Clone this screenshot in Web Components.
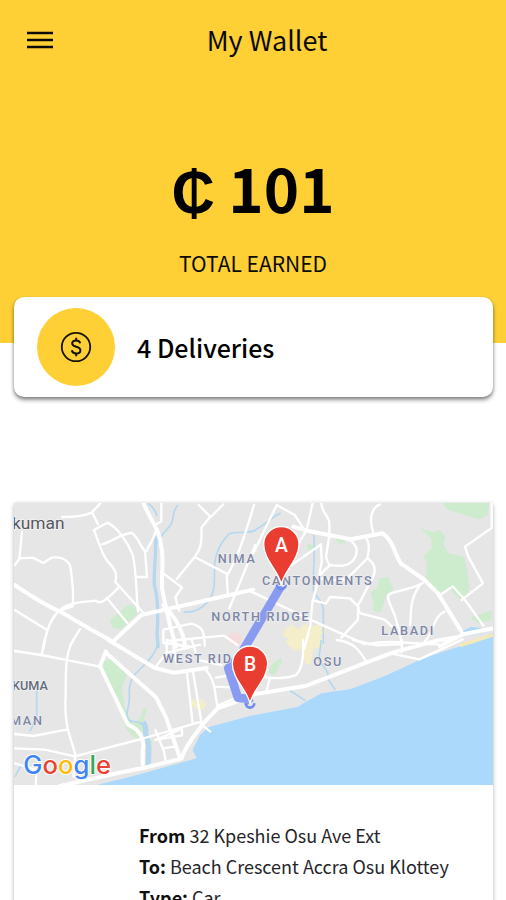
<!DOCTYPE html>
<html lang="en">
<head>
<meta charset="utf-8">
<meta name="viewport" content="width=device-width, initial-scale=1">
<title>My Wallet</title>
<style>
  html { scrollbar-width: none; }
  body {
    margin: 0;
    background: #fff;
    color: #0c0a05;
    font-family: "Noto Sans CJK SC", "Liberation Sans", sans-serif;
    --accent: #fed036;
  }
</style>
</head>
<body>
<wallet-page>
  <wallet-header slot="header" heading="My Wallet" label="Total earned">₵ 101</wallet-header>
  <delivery-summary>4 Deliveries</delivery-summary>
  <trip-card>
    <route-map slot="map"></route-map>
    <trip-detail label="From">32 Kpeshie Osu Ave Ext</trip-detail>
    <trip-detail label="To:">Beach Crescent Accra Osu Klottey</trip-detail>
    <trip-detail label="Type:">Car</trip-detail>
  </trip-card>
</wallet-page>

<script>
function define(name, html, setup) {
  const template = document.createElement('template');
  template.innerHTML = html;
  customElements.define(name, class extends HTMLElement {
    constructor() {
      super();
      this.attachShadow({ mode: 'open' }).append(template.content.cloneNode(true));
    }
    connectedCallback() {
      if (setup) setup(this, this.shadowRoot);
    }
  });
}

// -- wallet-page --
define('wallet-page', `
  <style>
    :host { display: block; }
    main { display: flex; flex-direction: column; gap: 106px; margin: -46px 13px 0 14px; }
  </style>
  <slot name="header"></slot>
  <main><slot></slot></main>
`);

// -- wallet-header --
define('wallet-header', `
  <style>
    :host { display: block; background: var(--accent); padding-bottom: 66px; }
    nav { display: flex; align-items: center; height: 80px; padding: 0 26px; }
    button { display: flex; padding: 0; border: 0; background: none; color: inherit; cursor: pointer; }
    h1 { flex: 1; margin: 0; text-align: center; font-size: 27px; font-weight: 400; line-height: 40px; }
    .total { display: flex; flex-direction: column; align-items: center; gap: 22px; padding-top: 67px; }
    .amount { font-size: 60px; font-weight: 700; line-height: 80px; color: #000; }
    .label { font-size: 21px; line-height: 28px; text-transform: uppercase; }
    .amount, .label { margin: 0; }
  </style>
  <nav>
    <button type="button" aria-label="Menu">
      <svg width="28" height="20" viewBox="0 0 28 20" stroke="currentColor" stroke-width="2.400">
        <path d="M1 3h26M1 10h26M1 17h26"/>
      </svg>
    </button>
    <h1></h1>
  </nav>
  <div class="total">
    <p class="amount"><slot></slot></p>
    <p class="label"></p>
  </div>
`, (el, root) => {
  root.querySelector('h1').textContent = el.getAttribute('heading');
  root.querySelector('.label').textContent = el.getAttribute('label');
});

// -- delivery-summary --
define('delivery-summary', `
  <style>
    :host {
      display: flex; align-items: center; gap: 22px;
      padding: 11px 23px;
      background: #fff; border-radius: 10px;
      box-shadow: 0 3px 4px rgba(0,0,0,.42), 0 1px 3px rgba(0,0,0,.18);
    }
    .badge {
      display: grid; place-items: center;
      width: 78px; height: 78px; border-radius: 50%;
      background: var(--accent);
    }
    h2 { margin: 0; font-size: 25px; font-weight: 500; line-height: 36px; color: #000; }
  </style>
  <span class="badge">
    <svg width="32" height="32" viewBox="0 0 32 32" fill="none" stroke="#171202" aria-hidden="true">
      <circle cx="16" cy="16" r="14.2" stroke-width="1.8"/>
      <path stroke-width="2" d="M20.2 12.2c-.5-1.8-2-2.7-4-2.7-2.4 0-4 1.2-4 3.1 0 2 1.7 2.6 4 3.2 2.5.6 4.2 1.3 4.2 3.4 0 2-1.7 3.3-4.2 3.3-2.4 0-4-1.100-4.400-3.200M16.200 6.800v2.700M16.200 22.500v2.700"/>
    </svg>
  </span>
  <h2><slot></slot></h2>
`);

// -- trip-card --
define('trip-card', `
  <style>
    :host { display: block; background: #fff; border-radius: 3px; box-shadow: 0 1px 4px rgba(0,0,0,.3); }
    .details { padding: 35px 24px 36px 125px; }
  </style>
  <slot name="map"></slot>
  <div class="details"><slot></slot></div>
`);

// -- trip-detail --
define('trip-detail', `
  <style>
    :host { display: block; font-size: 18px; line-height: 31px; color: #26262a; }
    b { font-weight: 700; color: #101010; }
  </style>
  <b></b> <slot></slot>
`, (el, root) => {
  root.querySelector('b').textContent = el.getAttribute('label');
});

// -- route-map --
// Drawn in three units per pixel. Each layer is split in four tiles: nw, ne, sw, se.
define('route-map', `
  <style>
    :host { display: block; }
    svg { display: block; width: 100%; height: auto; overflow: hidden; }
    .road { fill: none; stroke: #fff; stroke-width: 7; stroke-linejoin: round; stroke-linecap: round; }
    .main { stroke-width: 12; }
    .river { fill: none; stroke: #b5d8f0; stroke-width: 5; stroke-linejoin: round; }
    .park { fill: #cdebcd; }
    .town { fill: #f5eecb; }
    .sea { fill: #aad9fb; }
    .area { font: 500 38px Roboto, sans-serif; letter-spacing: 5px; fill: #7e86a3; stroke: #eef0f4; stroke-width: 4; paint-order: stroke; }
    .city { font: 400 52px Roboto, sans-serif; fill: #55585d; stroke: #f4f4f4; stroke-width: 4; paint-order: stroke; }
    .near { font: 500 38px Roboto, sans-serif; fill: #636b7b; stroke: #f4f4f4; stroke-width: 4; paint-order: stroke; }
    .logo { font: 500 77px Inter, sans-serif; stroke: #fff; stroke-width: 6; paint-order: stroke; stroke-linejoin: round; }
    .pin { fill: #ea3d32; stroke: #fff; stroke-width: 4; }
    .letter { font: 500 58px Roboto, sans-serif; fill: #fff; text-anchor: middle; }
  </style>
  <svg viewBox="0 0 1437 846" role="img" aria-label="Route from A to B">
    <rect width="1437" height="846" fill="#e6e6e6"/>

    <g class="park">
      <path transform="translate(-42 -24)" d="M330 375l50-43 18-3 16 25-52 50-24-6z"/>
      <g transform="translate(708 -24)">
        <path d="M578 24h140l-5 35-25 14-58-17-36-12z"/>
        <path d="M510 98l40 15 18-8 18 18-6 24 15 28 48 10 8 42 8 50-8 20 3 10-20 12-36-38-24 10-30-13-17-24 5-48-12-22 26-26-2-28z"/>
        <path d="M388 250l28-3 14 34-22 20-14 50-25-3 2-30-10-22 22-20z"/>
        <path d="M172 148l24 2-4 14-20 2zM258 130l24-3 5 16-22 3z"/>
        <path d="M660 370l65-25v30l-40 10z"/>
      </g>
      <g transform="translate(-42 411)">
        <path d="M310 65l20-8 30 22 20 25-15 40 10 60 12 25 15 22 20-20 10-30 9 8-14 44 10 30 18 20-2 30-14 10-15-40-25-15-20-22-16-50-38-70-14-45z"/>
      </g>
      <path transform="translate(708 411)" d="M55 100l5-22 32-25 4 10-22 42z"/>
    </g>

    <g class="town">
      <path transform="translate(708 -24)" d="M104 405l22-18 12 14h10l20-18 8 14 26-8 24 2v28l-18 4 16 12-8 20-26 6-8 48-16-2-4-32-12-16-14 12-8-24-14 6v-24l-16-6z"/>
      <path transform="translate(708 411)" d="M106 0h50l20 10-2 50-14 2-4-30-16-10-12 8z"/>
      <path transform="translate(-42 411)" d="M580 178l12 8 18-12-2 14 14 2-12 18-14 4-18-12-6-14z"/>
    </g>
    <circle cx="662" cy="408" r="20" fill="#f6dbdd"/>

    <g class="river">
      <g transform="translate(-42 -24)">
        <path d="M443 24c14 10 24 20 28 40M534 30c-20 20-10 40-22 60-20 24-36 40-42 56"/>
        <path stroke-width="10" d="M466 125c4 60-6 100-3 145 10 34 12 90 8 150 2 20 3 26 3 40"/>
        <path d="M766 106c-30 12-54 2-78 10-20 20-40 50-44 90-2 40 4 80-15 105-20 30-46 42-78 40"/>
      </g>
      <g transform="translate(708 -24)">
        <path d="M0 112c40-14 60-44 92-58M192 120c4 60-4 110-2 165 10 30 30 30 30 62v100"/>
      </g>
      <g transform="translate(-42 411)">
        <path d="M474 0c-2 44-40 72-70 104-20 26-16 50-16 72 0 30-16 52 0 66 20 6 36 0 46 20"/>
        <path stroke-width="16" d="M430 245c14 20 2 30 10 50 10 22 6 40 4 84"/>
        <path d="M110 150v80l-20 44M45 410l20-38"/>
      </g>
      <path transform="translate(708 411)" d="M214 0l-8 60c20 30 30 30 30 60l20 30M118 150l48 32"/>
    </g>

    <path class="sea" d="M1437 391l-39 15-65 25-105 35-115 53-105 40-85 12-55 30-15 10-145 28-125 34-25 23-22 45 12 25-190 53-110 27h1189z"/>
    <path d="M1437 396l-99 32" stroke="#f4e9b7" stroke-width="10"/>
    <path d="M1346 384l24-12 34 4 4 14-54 8z" fill="#aad9fb"/>

    <g class="road">
      <g transform="translate(-42 -24)">
        <path d="M300 26l-24 26 18 36M276 52c-24 12-60 14-90 14M66 110l-8 82-14 18"/>
        <path d="M58 190l40-2 32 16 24-16c40-6 58 18 58 34 6 40 10 70 6 112l-42 14M180 345c20-20 60-24 108-28 12 14 34-4 68-40"/>
        <path d="M282 105l40-22c30 14 60 56 76 96 12 50 10 110 16 170M305 148c30-6 60-34 90-34 20 10 24 40 40 54l6 78h-28"/>
        <path d="M282 105c16 40 20 70 44 98 26 26 24 40 20 58l84 92M466 110c-6 30-24 46-26 58M320 308l62 76M484 24v55l-14 8"/>
        <path d="M596 30l36 36 38-38M630 66l-26 32c4 50-6 70-20 88l-54 66M584 186l96 50 3 58M762 30c-30 100-50 160-80 210M766 150l-78 190M490 235l56 42-20 30c8 22 4 30 12 40"/>
        <path d="M44 345l94 58M180 345c-30 26-38 60-50 106M240 402l-30 50M490 404l84-18c34 8 40 26 40 66M490 404v40l80 10M500 438l172-16 40 28"/>
        <path class="main" d="M44 270c50 34 90 60 140 82 60 34 100 60 156 88"/>
        <path class="main" d="M338 440l86-80 336-76"/>
        <path class="main" d="M430 24c20 50 50 80 54 132 10 40-4 100 4 134 6 30 20 100 40 165M490 330c40 40 60 80 66 125"/>
      </g>
      <g transform="translate(708 -24)">
        <path d="M10 175L80 30l54 30 28 42M188 24l-18 80-50 88M214 24c0 30 26 40 24 64v34l-10 64c6 20 10 24 14 24"/>
        <path d="M125 210l88-62 2 52-10 56-18 66-6 70-18 68M296 132c32 22 28 44 12 66-20 20-44 14-66 12-20 14-24 20-30 30"/>
        <path d="M390 28c-22 8-36 40-20 84M346 126c16 20 10 40 6 64l-60 60c-30 14-60 0-85 0M352 190c30 20 24 46 12 66-20 34-24 50-40 74l4 24 76 20 42 40M190 316l38 10 12-20 60 4 24 24v40l-50 54"/>
        <path d="M518 264c-30 20-90 24-100 34-16 10 22 60 22 86l10 24 5 46M510 270c-36 50-24 90-30 120M568 302l40-28 38 42 54 76M725 24v75l-80 56 10 30 44 80-64 50M584 350c-36 14-30 60-60 90"/>
        <path d="M0 288l190 90 156 70M356 448c60-16 140 0 210 0"/>
        <path class="main" d="M130 95l50 14 122 24 96-18c30 20 36 60 54 90l72 50 40 40 70 114M730 400l-90 18-70 35"/>
      </g>
      <g transform="translate(-42 411)">
        <path d="M44 33l80 12 172 34M135 0l-10 44M220 0c-30 50-20 110-24 190 0 80 16 100 32 160M44 282l56 6 104-20M44 325l90 4 90 20 200-52 180-52M110 380l-3 60M225 350l-5 60M44 370l60 18"/>
        <path d="M560 90l18 160M520 20l10 50M578 90l26 155M614 85c40 50 26 70 38 110M694 105l-46 8M690 142l-46-2M715 170l-65 28M466 82l34-44 60-14M500 38v-38M575 0l20 60 70 15"/>
        <path d="M466 300l80-34v20l-74 12M466 270l26 64 4 24M490 325l36-6M600 250l30 24M500 0l60 24 40-10"/>
        <path class="main" d="M325 0l140 84 55 14 100-14M318 34l-18 44 84 176c44 20 50 50 44 80v40"/>
        <path class="main" d="M318 38l60 54 90 80 30 60 40 116"/>
        <path class="main" d="M180 438c100-22 190-44 250-54l114-28c20-54 50-80 66-106l44-46 100-34"/>
      </g>
      <g transform="translate(708 411)">
        <path d="M160 0c0 50-2 90-24 106-34 12-60 10-88 6M60 112l-10 40M260 0c50 6 70 30 90 68M310 0l70 16 76-4M456 0v36M432 42l76 16 130-60"/>
        <path class="main" d="M0 165l170-28 180-70 80-30 130-35 60-10"/>
      </g>
    </g>

    <path d="M801 249L676 461l-33 35 29 89 28 2 8 14" fill="none" stroke="#7d92f2" stroke-width="26" stroke-linejoin="round" opacity=".9"/>
    <path d="M789 245a13 13 0 1 0 26 0M695 601a13 13 0 1 0 26 0" fill="none" stroke="#708af0" stroke-width="8"/>

    <text class="city" x="-6" y="79">kuman</text>
    <text class="near" x="-6" y="561">KUMA</text>
    <g class="area">
      <text x="611" y="181">NIMA</text>
      <text x="744" y="245">CANTONMENTS</text>
      <text x="592" y="355">NORTH RIDGE</text>
      <text x="1102" y="395">LABADI</text>
      <text x="447" y="480">WEST RIDGE</text>
      <text x="898" y="488">OSU</text>
      <text x="-12" y="665">MAN</text>
    </g>

    <path class="pin" d="M802 246C797 206 749 172 749 124a53 53 0 0 1 106 0C855 172 807 206 802 246z"/>
    <path class="pin" d="M708 603C703 563 655 529 655 482a53 53 0 0 1 106 0C761 529 713 563 708 603z"/>
    <text class="letter" x="802" y="147">A</text>
    <text class="letter" x="708" y="504">B</text>

    <text class="logo" x="28" y="813"><tspan fill="#4285f4">G</tspan><tspan fill="#ea4335">o</tspan><tspan fill="#fbbc05">o</tspan><tspan fill="#4285f4">g</tspan><tspan fill="#34a853">l</tspan><tspan fill="#ea4335">e</tspan></text>
  </svg>
`);
</script>
</body>
</html>
